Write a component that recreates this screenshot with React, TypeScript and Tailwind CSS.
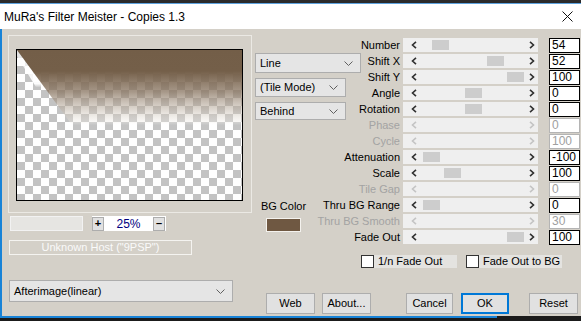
import React from "react";

type Row = { label: string; value: string; pos?: number; disabled?: boolean };

const rows: Row[] = [
  { label: "Number", value: "54", pos: 432 },
  { label: "Shift X", value: "52", pos: 487 },
  { label: "Shift Y", value: "100", pos: 507 },
  { label: "Angle", value: "0", pos: 465 },
  { label: "Rotation", value: "0", pos: 465 },
  { label: "Phase", value: "0", disabled: true },
  { label: "Cycle", value: "100", disabled: true },
  { label: "Attenuation", value: "-100", pos: 423 },
  { label: "Scale", value: "100", pos: 444 },
  { label: "Tile Gap", value: "0", disabled: true },
  { label: "Thru BG Range", value: "0", pos: 423 },
  { label: "Thru BG Smooth", value: "30", disabled: true },
  { label: "Fade Out", value: "100", pos: 507 },
];

function Chevron() {
  return (
    <svg width="9" height="5" viewBox="0 0 9 5">
      <path d="M0.5 0.5 L4.5 4.5 L8.5 0.5" fill="none" stroke="#606060" strokeWidth="1" />
    </svg>
  );
}

function Arrow({ dir, disabled }: { dir: "l" | "r"; disabled?: boolean }) {
  return (
    <svg width="6" height="8" viewBox="0 0 6 8">
      <path
        d={dir === "l" ? "M5 0.8 L1.5 4 L5 7.2" : "M1 0.8 L4.5 4 L1 7.2"}
        fill="none"
        stroke={disabled ? "#c4c4c4" : "#303030"}
        strokeWidth="1.6"
      />
    </svg>
  );
}

function Combo({ text, w, h }: { text: string; w: string; h: string }) {
  return (
    <div className={`flex ${w} ${h} items-center justify-between border border-[#adadad] bg-[#e5e5e5] pl-[4px] pr-[7px]`}>
      <span>{text}</span>
      <Chevron />
    </div>
  );
}

function Btn({ text, ok, w }: { text: string; ok?: boolean; w: string }) {
  return (
    <div
      className={`flex h-[21px] ${w} items-center justify-center bg-[#e1e1e1] ${
        ok ? "border-2 border-[#0078d7]" : "border border-[#adadad]"
      }`}
    >
      {text}
    </div>
  );
}

function Preview() {
  return (
    <div className="h-[152px] w-[227px] border border-black">
      <svg width="225" height="150" viewBox="0 0 225 150" className="block">
        <defs>
          <pattern id="chk" width="16" height="16" patternUnits="userSpaceOnUse">
            <rect width="16" height="16" fill="#ffffff" />
            <rect width="8" height="8" fill="#c3c3c3" />
            <rect x="8" y="8" width="8" height="8" fill="#c3c3c3" />
          </pattern>
          <linearGradient id="fade" x1="0" y1="0" x2="0" y2="1">
            <stop offset="0" stopColor="#735e48" stopOpacity="1" />
            <stop offset="0.14" stopColor="#745f49" stopOpacity="1" />
            <stop offset="0.28" stopColor="#8a7662" stopOpacity="0.75" />
            <stop offset="0.4" stopColor="#c0b4a6" stopOpacity="0.5" />
            <stop offset="0.48" stopColor="#f0ece6" stopOpacity="0.35" />
            <stop offset="0.5" stopColor="#ffffff" stopOpacity="0" />
          </linearGradient>
          <linearGradient id="haze" x1="0" y1="0" x2="0" y2="1">
            <stop offset="0" stopColor="#ffffff" stopOpacity="0.5" />
            <stop offset="0.45" stopColor="#ffffff" stopOpacity="0.95" />
            <stop offset="0.5" stopColor="#ffffff" stopOpacity="0" />
          </linearGradient>
        </defs>
        <rect width="225" height="150" fill="url(#chk)" />
        <polygon points="0,0 0,6 42,75 56,75" fill="url(#haze)" />
        <polygon points="0,0 225,0 225,150 110,150" fill="url(#fade)" />
      </svg>
    </div>
  );
}

export default function App() {
  return (
    <div className="flex h-[321px] w-[581px] flex-col overflow-hidden bg-[#d4d0c8] font-['Liberation_Sans',Arial,sans-serif] text-[11px] text-black">
      {/* title bar */}
      <div className="h-[3px] bg-[#2b2b2b]" />
      <div className="h-px bg-[#5ea3de]" />
      <div className="flex h-[25px] items-center justify-between bg-white pl-[4px] pr-[8px]">
        <span className="text-[12px]">MuRa's Filter Meister - Copies 1.3</span>
        <svg width="11" height="11" viewBox="0 0 11 11">
          <path d="M0.5 0.5 L10.5 10.5 M10.5 0.5 L0.5 10.5" stroke="#111" strokeWidth="1" />
        </svg>
      </div>

      {/* body */}
      <div className="flex flex-1 border-l-2 border-[#1883d7]">
        {/* left column */}
        <div className="flex w-[253px] shrink-0 flex-col">
          <div className="ml-[6px] mt-[6px] h-[178px] w-[244px] border border-[#ebe9e4] pl-[7px] pt-[13px]">
            <Preview />
          </div>
          <div className="mt-[3px] flex h-[15px] items-center">
            <div className="ml-[8px] h-[15px] w-[73px] border border-[#f2f2f2] bg-[#e6e5e2]" />
            <div className="ml-[9px] flex h-[15px] w-[74px] items-center justify-between bg-white">
              <div className="flex h-[14px] w-[12px] items-center justify-center border border-[#adadad] bg-[#e1e1e1] text-[11px] font-bold leading-none">
                +
              </div>
              <span className="text-[12px] text-[#000080]">25%</span>
              <div className="mr-px flex h-[14px] w-[12px] items-center justify-center border border-[#adadad] bg-[#e1e1e1] text-[11px] font-bold leading-none">
                –
              </div>
            </div>
          </div>
          <div className="ml-[7px] mt-[9px] flex h-[15px] w-[183px] items-center justify-center border border-[#f4f3f0] text-[#fafafa]">
            Unknown Host ("9PSP")
          </div>
          <div className="ml-[7px] mt-[25px]">
            <Combo text="Afterimage(linear)" w="w-[224px]" h="h-[22px]" />
          </div>
        </div>

        {/* right section */}
        <div className="flex flex-1 flex-col pt-[8px]">
          <div className="flex">
            <div className="flex w-[106px] shrink-0 flex-col">
              <div className="mt-[16px]">
                <Combo text="Line" w="w-[106px]" h="h-[20px]" />
              </div>
              <div className="mt-[5px]">
                <Combo text="(Tile Mode)" w="w-[91px]" h="h-[19px]" />
              </div>
              <div className="mt-[5px]">
                <Combo text="Behind" w="w-[91px]" h="h-[18px]" />
              </div>
              <div className="ml-[8px] mt-[78px] flex w-[41px] flex-col items-center">
                <span className="whitespace-nowrap">BG Color</span>
                <div className="mt-[3px] h-[14px] w-[35px] border border-[#f4f2ee] bg-[#6f5842]" />
              </div>
            </div>

            <div className="flex flex-col">
              {rows.map((r) => (
                <div key={r.label} className="flex h-[16px] items-center">
                  <div className="flex w-[39px] shrink-0 justify-end whitespace-nowrap">
                    <span className={r.disabled ? "text-[#a3a3a3]" : "text-black"}>{r.label}</span>
                  </div>
                  <div className="relative ml-[3px] flex h-[14px] w-[135px] items-center justify-between bg-[#efefef]">
                    <div className="ml-[8px]">
                      <Arrow dir="l" disabled={r.disabled} />
                    </div>
                    {r.pos !== undefined && (
                      <div
                        className="absolute top-[2px] h-[10px] w-[17px] bg-[#cdcdcd]"
                        style={{ left: r.pos - 403 }}
                      />
                    )}
                    <div className="mr-[3px]">
                      <Arrow dir="r" disabled={r.disabled} />
                    </div>
                  </div>
                  <div
                    className={`ml-[11px] flex h-[15px] w-[31px] items-center bg-white pl-[2px] text-[12px] ${
                      r.disabled ? "border border-[#b4b4b4] text-[#a0a0a0]" : "border border-black text-black"
                    }`}
                  >
                    {r.value}
                  </div>
                </div>
              ))}
            </div>
          </div>

          {/* checkboxes */}
          <div className="ml-[106px] mt-[10px] flex h-[13px] items-center gap-[9px]">
            <div className="flex h-[13px] w-[96px] items-center bg-[#e4e3e0]">
              <div className="h-[13px] w-[13px] border border-[#333] bg-white" />
              <span className="ml-[4px]">1/n Fade Out</span>
            </div>
            <div className="flex h-[13px] w-[96px] items-center bg-[#e4e3e0]">
              <div className="h-[13px] w-[13px] border border-[#333] bg-white" />
              <span className="ml-[4px]">Fade Out to BG</span>
            </div>
          </div>

          {/* buttons */}
          <div className="ml-[11px] mt-[25px] flex items-center">
            <Btn text="Web" w="w-[49px]" />
            <div className="ml-[7px]">
              <Btn text="About..." w="w-[49px]" />
            </div>
            <div className="ml-[35px]">
              <Btn text="Cancel" w="w-[47px]" />
            </div>
            <div className="ml-[8px]">
              <Btn text="OK" ok w="w-[48px]" />
            </div>
            <div className="ml-[20px]">
              <Btn text="Reset" w="w-[49px]" />
            </div>
          </div>
        </div>
      </div>

      {/* bottom edge */}
      <div className="flex h-[5px]">
        <div className="h-full w-[497px] border-t-2 border-[#1883d7] bg-[#1b1b1b]" />
        <div className="h-full flex-1 bg-[#1b1b1b]" />
      </div>
    </div>
  );
}
